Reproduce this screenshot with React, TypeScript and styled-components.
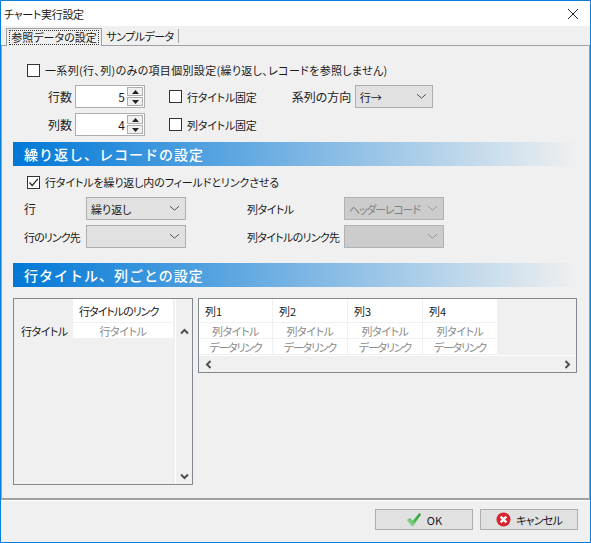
import * as React from "react";
import styled, { createGlobalStyle } from "styled-components";

const GlobalStyle = createGlobalStyle`
  html, body { margin: 0; padding: 0; background: #fff; }
  * { box-sizing: border-box; }
  body {
    font-family: "Noto Sans CJK JP", "Noto Sans", sans-serif;
    font-size: 11px;
    line-height: 14px;
    font-feature-settings: "palt";
    color: #1a1a1a;
    white-space: nowrap;
  }
`;

const Window = styled.div`
  width: 591px;
  height: 543px;
  border: 1px solid #0a7fd8;
  background: #f0f0f0;
  display: flex;
  flex-direction: column;
  overflow: hidden;
`;

const TitleBar = styled.div`
  height: 25px;
  background: #fff;
  display: flex;
  align-items: center;
  justify-content: space-between;
  padding: 0 11px 0 3px;
  letter-spacing: -0.3px;
  flex: none;
`;

const TabRow = styled.div`
  height: 19px;
  display: flex;
  align-items: flex-end;
  padding-left: 5px;
  flex: none;
  position: relative;
  z-index: 1;
`;

const ActiveTab = styled.div`
  height: 18px;
  width: 96px;
  margin-bottom: -1px;
  display: flex;
  align-items: center;
  justify-content: center;
  background: #f0f0f0;
  border: 1px solid #a0a0a0;
  border-bottom: 0;
`;

const PlainTab = styled.div`
  height: 14px;
  width: 77px;
  margin-bottom: 2px;
  display: flex;
  align-items: center;
  justify-content: center;
  letter-spacing: -0.5px;
  border-right: 1px solid #a0a0a0;
`;

const FocusLabel = styled.span`
  outline: 1px dotted #333;
  padding: 0 1px;
  line-height: 13px;
`;

const Panel = styled.div`
  height: 455px;
  flex: none;
  border: 1px solid #a0a0a0;
  border-bottom: 2px solid #a0a0a0;
  padding: 0 10px 0 11px;
  display: flex;
  flex-direction: column;
`;

const Footer = styled.div`
  flex: 1;
  border-top: 1px solid #fff;
  display: flex;
  justify-content: flex-end;
  gap: 7px;
  padding: 8px 12px 0 0;
`;

const CheckRow = styled.label<{ $top: number; $left?: number; $spacing?: number }>`
  display: flex;
  align-items: center;
  gap: 5px;
  height: 14px;
  margin-top: ${(p) => p.$top}px;
  margin-left: ${(p) => p.$left ?? 14}px;
  letter-spacing: ${(p) => p.$spacing ?? 0}px;
`;

const Box = styled.span`
  width: 13px;
  height: 13px;
  background: #fff;
  border: 1px solid #333;
  display: flex;
  align-items: center;
  justify-content: center;
  flex: none;
`;

const FieldRow = styled.div<{ $top: number }>`
  display: flex;
  align-items: center;
  height: 23px;
  margin-top: ${(p) => p.$top}px;
`;

const Label = styled.span<{ $left: number; $width: number; $large?: boolean; $spacing?: number }>`
  margin-left: ${(p) => p.$left}px;
  width: ${(p) => p.$width}px;
  flex: none;
  font-size: ${(p) => (p.$large ? "12px" : "11px")};
  letter-spacing: ${(p) => p.$spacing ?? 0}px;
`;

const Spin = styled.div`
  width: 70px;
  height: 23px;
  background: #fff;
  border: 1px solid #adadad;
  display: flex;
  align-items: center;
  justify-content: flex-end;
  padding-right: 1px;
  gap: 2px;
  flex: none;
  font-size: 12px;
`;

const SpinButtons = styled.div`
  width: 16px;
  height: 19px;
  display: flex;
  flex-direction: column;
  gap: 1px;
`;

const SpinButton = styled.div`
  flex: 1;
  background: #f0f0f0;
  border: 1px solid #adadad;
  display: flex;
  align-items: center;
  justify-content: center;
`;

const Select = styled.div<{ $width: number; $disabled?: boolean }>`
  width: ${(p) => p.$width}px;
  height: 23px;
  flex: none;
  background: ${(p) => (p.$disabled ? "#cccccc" : "#e1e1e1")};
  border: 1px solid ${(p) => (p.$disabled ? "#adb2b5" : "#adadad")};
  color: ${(p) => (p.$disabled ? "#838383" : "inherit")};
  letter-spacing: ${(p) => (p.$disabled ? "-1.2px" : "0")};
  display: flex;
  align-items: center;
  justify-content: space-between;
  padding: 0 5px 0 4px;
`;

const SectionBar = styled.div<{ $top: number }>`
  height: 24px;
  width: 565px;
  flex: none;
  margin-top: ${(p) => p.$top}px;
  padding-left: 11px;
  display: flex;
  align-items: center;
  color: #fff;
  font-size: 14px;
  font-weight: 500;
  letter-spacing: 1px;
  font-feature-settings: normal;
  background: linear-gradient(90deg, #0078d7 0%, #f0f0f0 100%);
`;

const Grids = styled.div`
  display: flex;
  align-items: flex-start;
  gap: 5px;
  margin-top: 11px;
`;

const GridFrame = styled.div<{ $width: number; $height: number }>`
  width: ${(p) => p.$width}px;
  height: ${(p) => p.$height}px;
  border: 1px solid #828790;
  flex: none;
  display: flex;
`;

const LeftBody = styled.div`
  width: 160px;
  flex: none;
`;

const VScroll = styled.div`
  flex: 1;
  border-left: 1px solid #fff;
  margin-left: 1px;
  display: flex;
  flex-direction: column;
  align-items: center;
  justify-content: space-between;
  padding: 28px 0 3px;
`;

const RightBody = styled.div`
  flex: 1;
  display: flex;
  flex-direction: column;
`;

const Rows = styled.div`
  height: 57px;
  flex: none;
  border-bottom: 1px solid #fff;
`;

const GridRow = styled.div<{ $height: number }>`
  display: flex;
  height: ${(p) => p.$height}px;
  margin-bottom: 1px;
`;

const HeaderCell = styled.div<{ $width: number; $empty?: boolean; $spacing?: number }>`
  width: ${(p) => p.$width}px;
  flex: none;
  margin-right: 1px;
  background: ${(p) => (p.$empty ? "#f0f0f0" : "#fff")};
  display: flex;
  align-items: center;
  padding-left: 6px;
  letter-spacing: ${(p) => p.$spacing ?? 0}px;
`;

const DataCell = styled.div<{ $width: number; $spacing?: number }>`
  width: ${(p) => p.$width}px;
  flex: none;
  margin-right: 1px;
  background: #fff;
  color: #8a8a8a;
  display: flex;
  align-items: center;
  justify-content: center;
  letter-spacing: ${(p) => p.$spacing ?? -0.4}px;
`;

const RowHead = styled.div`
  width: 59px;
  flex: none;
  display: flex;
  align-items: center;
  padding-left: 7px;
  letter-spacing: -0.5px;
`;

const HScroll = styled.div`
  flex: 1;
  display: flex;
  align-items: center;
  justify-content: space-between;
  padding: 0 4px 0 5px;
`;

const Button = styled.div`
  width: 98px;
  height: 21px;
  background: #e1e1e1;
  border: 1px solid #adadad;
  display: flex;
  align-items: center;
  justify-content: center;
  gap: 5px;
  font-size: 11px;
`;

const ButtonLabel = styled.span<{ $spacing?: number }>`
  letter-spacing: ${(p) => p.$spacing ?? 0}px;
`;

const Chevron = ({ color = "#555" }: { color?: string }) => (
  <svg width="11" height="7" viewBox="0 0 11 7">
    <path d="M1 1.2 L5.5 5.2 L10 1.2" fill="none" stroke={color} strokeWidth="1" />
  </svg>
);

const ScrollArrow = ({ dir }: { dir: "up" | "down" | "left" | "right" }) => {
  const rotate = { up: 180, down: 0, left: 90, right: -90 }[dir];
  return (
    <svg width="9" height="9" viewBox="0 0 9 9" style={{ transform: `rotate(${rotate}deg)` }}>
      <path d="M1 2.5 L4.5 6 L8 2.5" fill="none" stroke="#505050" strokeWidth="2" />
    </svg>
  );
};

const SpinField = ({ value }: { value: number }) => (
  <Spin>
    <span>{value}</span>
    <SpinButtons>
      <SpinButton>
        <svg width="7" height="4" viewBox="0 0 7 4"><path d="M3.5 0 L7 4 H0 Z" fill="#222" /></svg>
      </SpinButton>
      <SpinButton>
        <svg width="7" height="4" viewBox="0 0 7 4"><path d="M0 0 H7 L3.5 4 Z" fill="#222" /></svg>
      </SpinButton>
    </SpinButtons>
  </Spin>
);

const columns = ["列1", "列2", "列3", "列4"];
const widths = [73, 74, 74, 74];

export default function App() {
  return (
    <>
      <GlobalStyle />
      <Window>
        <TitleBar>
          <span>チャート実行設定</span>
          <svg width="12" height="12" viewBox="0 0 12 12">
            <path d="M1 1 L11 11 M11 1 L1 11" stroke="#222" strokeWidth="1" />
          </svg>
        </TitleBar>
        <TabRow>
          <ActiveTab><FocusLabel>参照データの設定</FocusLabel></ActiveTab>
          <PlainTab>サンプルデータ</PlainTab>
        </TabRow>
        <Panel>
          <CheckRow $top={17} $spacing={0.33}>
            <Box />
            <span>一系列(行、列)のみの項目個別設定(繰り返し、レコードを参照しません)</span>
          </CheckRow>
          <FieldRow $top={8}>
            <Label $left={35} $width={27} $large>行数</Label>
            <SpinField value={5} />
            <CheckRow $top={0} $left={24} $spacing={-0.2}><Box /><span>行タイトル固定</span></CheckRow>
            <Label $left={35} $width={63} $large>系列の方向</Label>
            <Select $width={78}>行→<Chevron /></Select>
          </FieldRow>
          <FieldRow $top={5}>
            <Label $left={35} $width={27} $large>列数</Label>
            <SpinField value={4} />
            <CheckRow $top={0} $left={24} $spacing={-0.2}><Box /><span>列タイトル固定</span></CheckRow>
          </FieldRow>
          <SectionBar $top={6}>繰り返し、レコードの設定</SectionBar>
          <CheckRow $top={9} $spacing={-0.13}>
            <Box>
              <svg width="11" height="11" viewBox="0 0 11 11">
                <path d="M1.5 5.5 L4.2 8.5 L9.8 1.8" fill="none" stroke="#222" strokeWidth="1.2" />
              </svg>
            </Box>
            <span>行タイトルを繰り返し内のフィールドとリンクさせる</span>
          </CheckRow>
          <FieldRow $top={8}>
            <Label $left={11} $width={62} $large>行</Label>
            <Select $width={100}>繰り返し<Chevron /></Select>
            <Label $left={61} $width={97} $spacing={-0.5}>列タイトル</Label>
            <Select $width={100} $disabled>ヘッダーレコード<Chevron color="#999" /></Select>
          </FieldRow>
          <FieldRow $top={5}>
            <Label $left={11} $width={62} $spacing={-0.9}>行のリンク先</Label>
            <Select $width={100}><span /><Chevron /></Select>
            <Label $left={61} $width={97} $spacing={-0.7}>列タイトルのリンク先</Label>
            <Select $width={100} $disabled><span /><Chevron color="#999" /></Select>
          </FieldRow>
          <SectionBar $top={15}>行タイトル、列ごとの設定</SectionBar>
          <Grids>
            <GridFrame $width={180} $height={187}>
              <LeftBody>
                <GridRow $height={23}>
                  <HeaderCell $width={58} $empty />
                  <HeaderCell $width={100} $spacing={-1}>行タイトルのリンク</HeaderCell>
                </GridRow>
                <GridRow $height={15}>
                  <RowHead>行タイトル</RowHead>
                  <DataCell $width={100}>行タイトル</DataCell>
                </GridRow>
              </LeftBody>
              <VScroll>
                <ScrollArrow dir="up" />
                <ScrollArrow dir="down" />
              </VScroll>
            </GridFrame>
            <GridFrame $width={379} $height={75}>
              <RightBody>
                <Rows>
                  <GridRow $height={23}>
                    {columns.map((c, i) => (
                      <HeaderCell key={c} $width={widths[i]}>{c}</HeaderCell>
                    ))}
                  </GridRow>
                  <GridRow $height={15}>
                    {columns.map((c, i) => (
                      <DataCell key={c} $width={widths[i]}>列タイトル</DataCell>
                    ))}
                  </GridRow>
                  <GridRow $height={15}>
                    {columns.map((c, i) => (
                      <DataCell key={c} $width={widths[i]} $spacing={-1.2}>データリンク</DataCell>
                    ))}
                  </GridRow>
                </Rows>
                <HScroll>
                  <ScrollArrow dir="left" />
                  <ScrollArrow dir="right" />
                </HScroll>
              </RightBody>
            </GridFrame>
          </Grids>
        </Panel>
        <Footer>
          <Button>
            <svg width="16" height="15" viewBox="0 0 16 15">
              <defs>
                <linearGradient id="okTick" x1="0" y1="1" x2="1" y2="0">
                  <stop offset="0" stopColor="#c6e8c8" />
                  <stop offset="0.5" stopColor="#3fbb45" />
                  <stop offset="1" stopColor="#0f9a1c" />
                </linearGradient>
              </defs>
              <path d="M1 8 L4 6 L6.5 9 L13.5 1 L15 2.5 L7 14 L5.5 14 Z" fill="url(#okTick)" stroke="#a6b8aa" strokeWidth="0.4" />
            </svg>
            <ButtonLabel>OK</ButtonLabel>
          </Button>
          <Button>
            <svg width="15" height="15" viewBox="0 0 15 15">
              <circle cx="7.5" cy="7.5" r="7" fill="#d9232e" />
              <path d="M4.7 4.7 L10.3 10.3 M10.3 4.7 L4.7 10.3" stroke="#fff" strokeWidth="2.4" />
            </svg>
            <ButtonLabel $spacing={-0.8}>キャンセル</ButtonLabel>
          </Button>
        </Footer>
      </Window>
    </>
  );
}
